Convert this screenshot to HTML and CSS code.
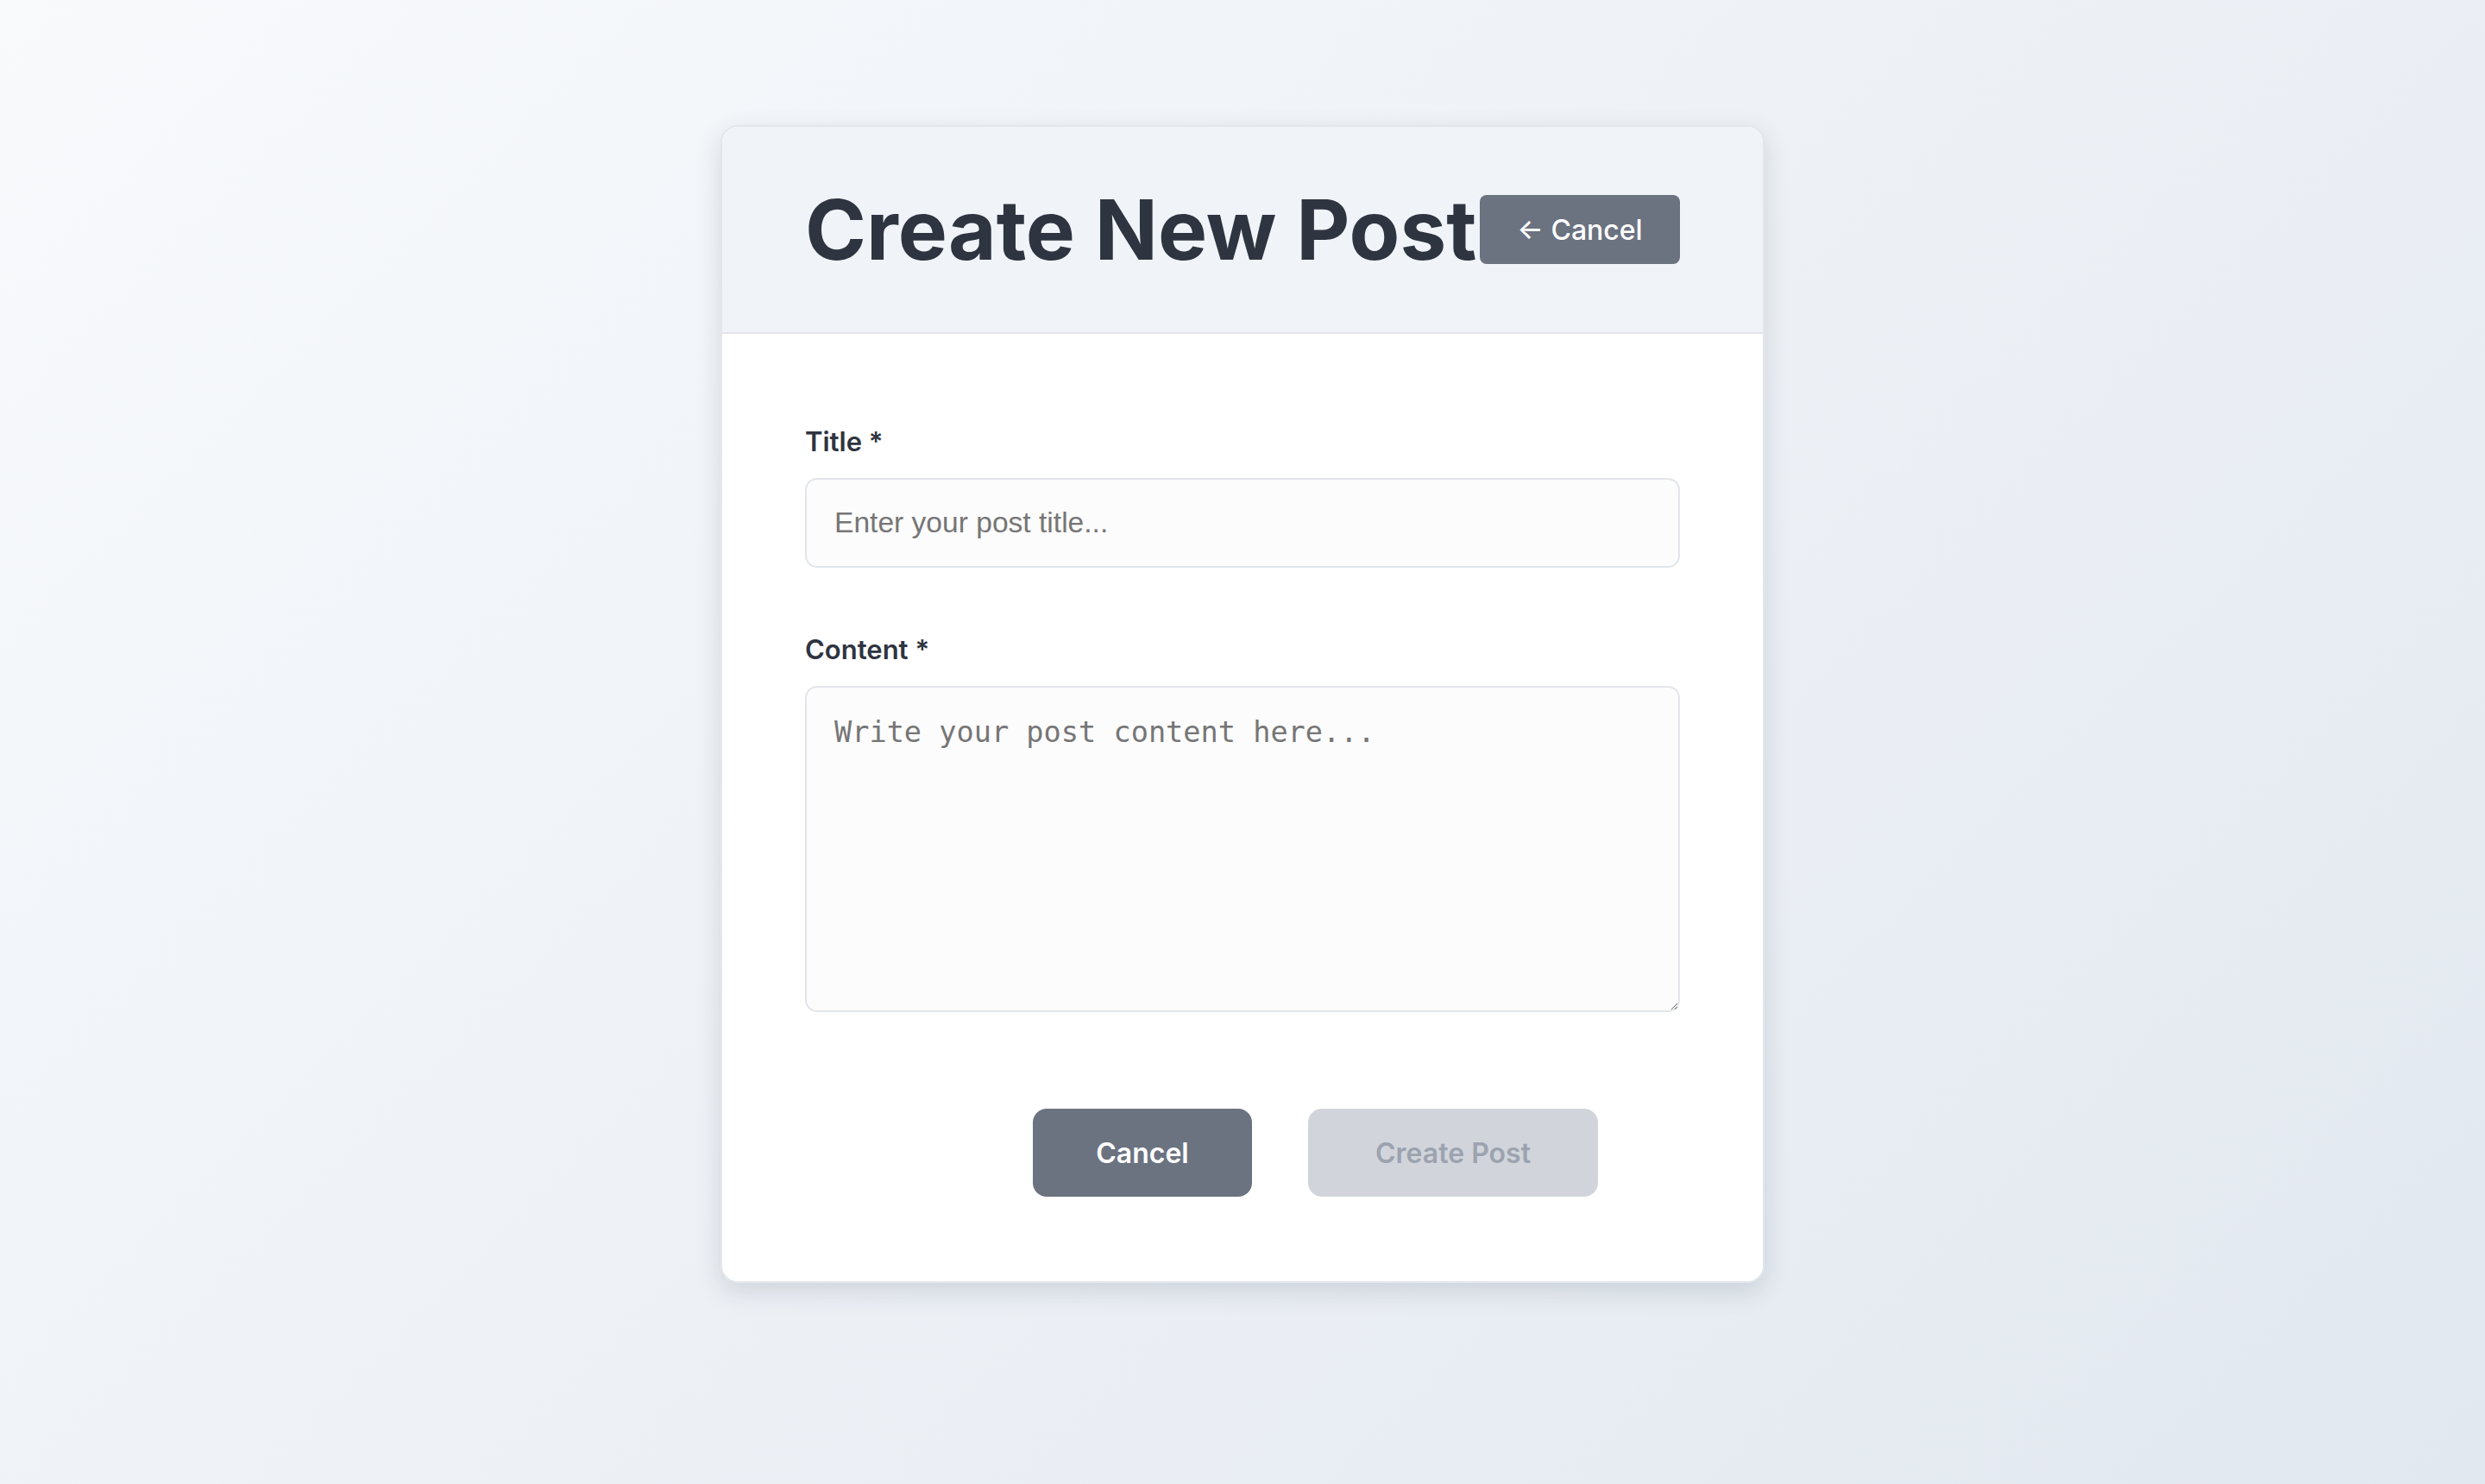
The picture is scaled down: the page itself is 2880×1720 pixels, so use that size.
FILE: index.html
```html
<!DOCTYPE html>
<html lang="en">
<head>
<meta charset="utf-8">
<title>Create New Post</title>
<link rel="stylesheet" href="styles.css">
</head>
<body>
<main class="page">
  <section class="card">
    <header class="card-header">
      <h1 class="card-title">Create New Post</h1>
      <button class="btn btn-back" type="button">← Cancel</button>
    </header>
    <form class="card-body">
      <div class="field">
        <label class="field-label" for="title">Title *</label>
        <input class="field-input" id="title" type="text" placeholder="Enter your post title...">
      </div>
      <div class="field">
        <label class="field-label" for="content">Content *</label>
        <textarea class="field-textarea" id="content" placeholder="Write your post content here..."></textarea>
      </div>
      <div class="actions">
        <button class="btn btn-cancel" type="button">Cancel</button>
        <button class="btn btn-submit" type="submit" disabled>Create Post</button>
      </div>
    </form>
  </section>
</main>
</body>
</html>
```
FILE: styles.css
```css
* { box-sizing: border-box; }

html, body {
  margin: 0;
  padding: 0;
}

body {
  min-height: 100vh;
  font-family: Inter, "Noto Sans", sans-serif;
  background: linear-gradient(135deg, #f8fafc 0%, #e2e8f0 100%);
  color: #2e3440;
}

.page {
  display: flex;
  justify-content: center;
  padding-top: 145px;
}

.card {
  width: 1210px;
  background: #ffffff;
  border: 2px solid #e3e7ec;
  border-radius: 20px;
  box-shadow: 0 10px 30px rgba(30, 40, 60, 0.14);
  overflow: hidden;
}

.card-header {
  display: flex;
  justify-content: space-between;
  align-items: center;
  padding: 64px 96px;
  background: #f0f3f8;
  border-bottom: 2px solid #e2e6ec;
}

.card-title {
  margin: 0;
  font-size: 96px;
  line-height: 1.15;
  font-weight: 700;
  letter-spacing: 0;
  color: #2e3440;
  white-space: nowrap;
}

.btn {
  font-family: Inter, "Noto Sans", sans-serif;
  border: none;
  cursor: pointer;
}

.btn-back {
  flex: none;
  width: 232px;
  height: 80px;
  padding: 0;
  border-radius: 8px;
  background: #6b7280;
  color: #ffffff;
  font-size: 32px;
  font-weight: 500;
}

.card-body {
  display: flex;
  flex-direction: column;
  padding: 107px 96px 98px;
}

.field {
  display: flex;
  flex-direction: column;
  margin-bottom: 77px;
}

.field-label {
  font-size: 31px;
  line-height: 36px;
  font-weight: 600;
  color: #2e3440;
  margin-bottom: 24px;
}

.field-input,
.field-textarea {
  width: 100%;
  border: 2px solid #e2e5ea;
  border-radius: 14px;
  background: #fcfcfc;
  font-size: 33.6px;
  padding: 32px;
  color: #2e3440;
  outline: none;
}

.field-input {
  height: 104px;
  padding-top: 0;
  padding-bottom: 0;
  font-family: "Liberation Sans", Arial, sans-serif;
}

.field-textarea {
  height: 378px;
  font-family: "DejaVu Sans Mono", monospace;
  resize: vertical;
}

.field-input::placeholder,
.field-textarea::placeholder {
  color: #767676;
}

.actions {
  display: flex;
  justify-content: flex-end;
  gap: 65px;
  padding-right: 95px;
  margin-top: 35px;
}

.actions .btn {
  height: 102px;
  padding: 0 72px;
  border-radius: 16px;
  font-size: 32px;
  font-weight: 600;
}

.btn-cancel {
  width: 254px;
  background: #6b7280;
  color: #ffffff;
}

.btn-submit {
  width: 336px;
  background: #d1d5db;
  color: #9ca3af;
  cursor: not-allowed;
}
```
